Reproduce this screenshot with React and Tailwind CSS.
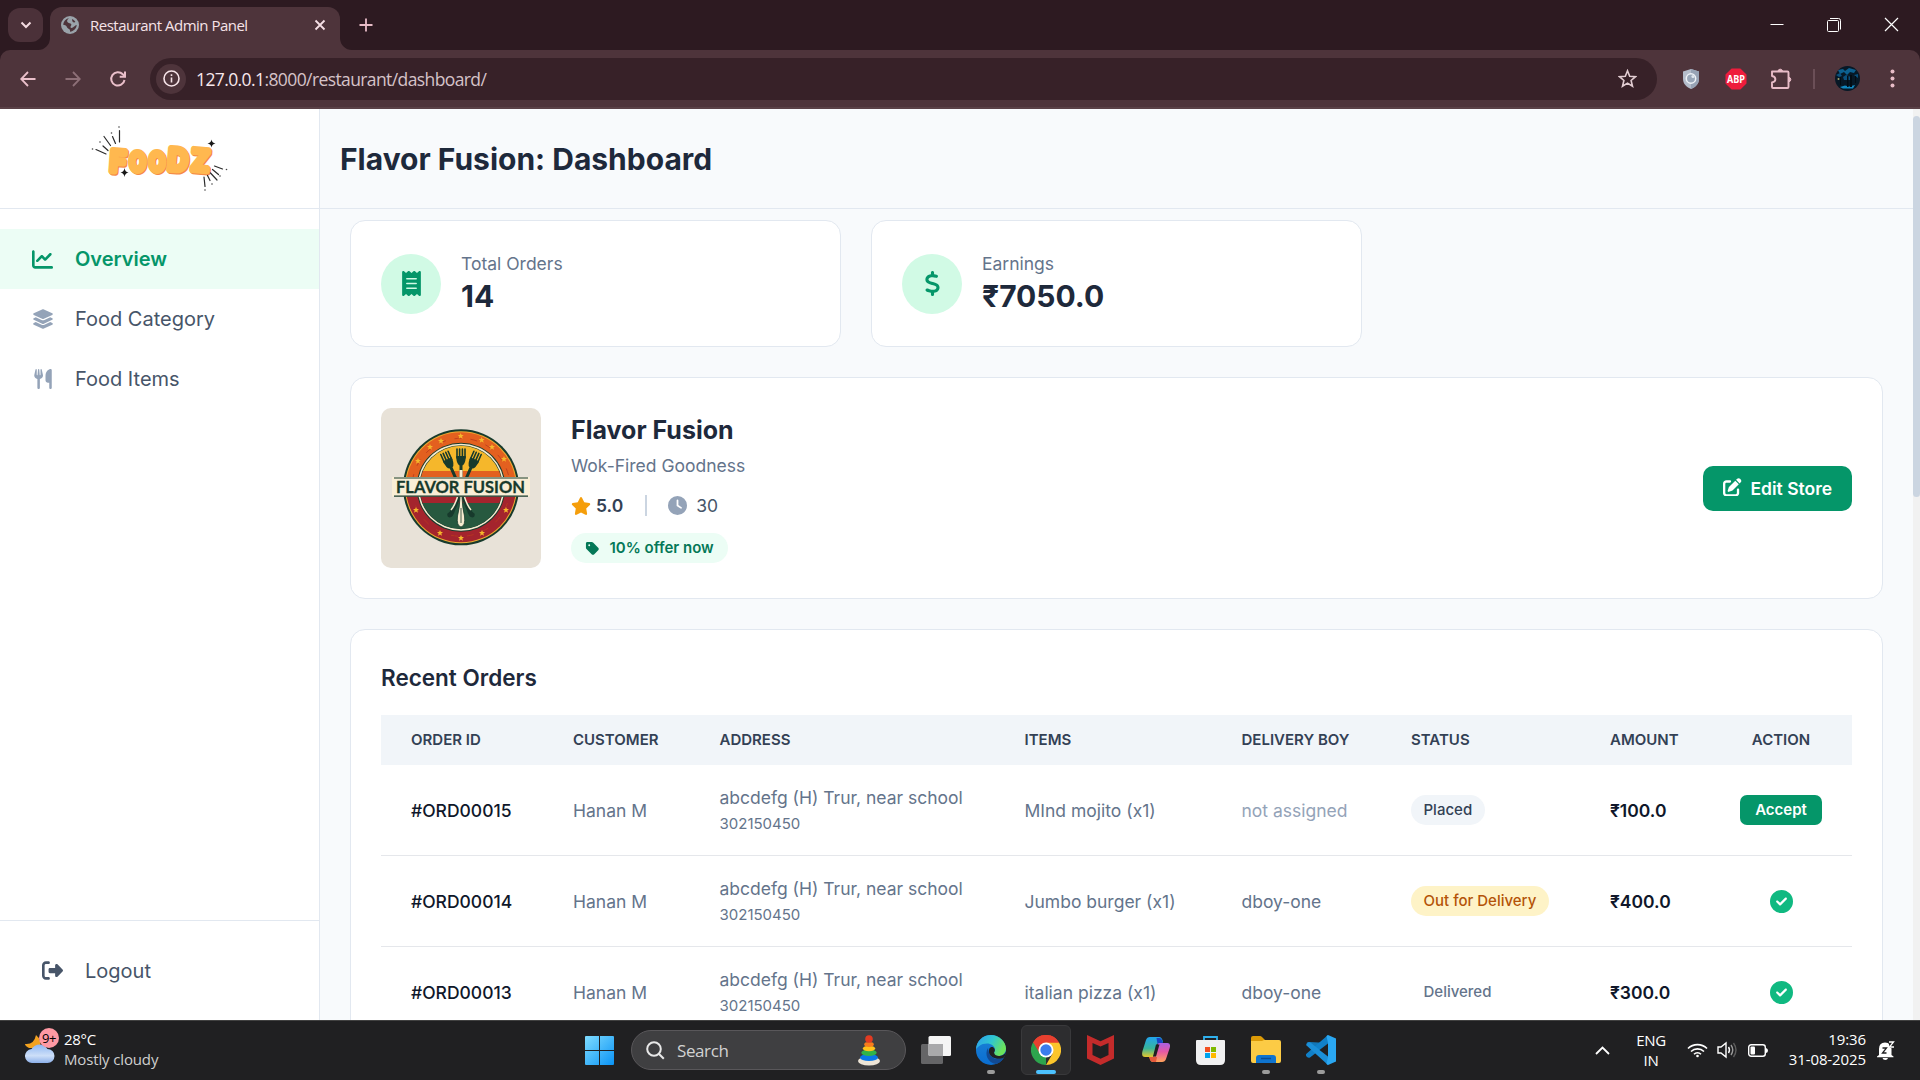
import React from "react";
import {
  FaChartLine, FaLayerGroup, FaUtensils, FaRightFromBracket, FaReceipt, FaDollarSign,
  FaStar, FaClock, FaTag, FaPenToSquare, FaCircleCheck,
} from "react-icons/fa6";

/* ---------- Browser chrome ---------- */

function GlobeIcon() {
  return (
    <svg width="18" height="18" viewBox="0 0 18 18">
      <circle cx="9" cy="9" r="9" fill="#9aa3aa" />
      <path d="M8 2.2C6.6 3 5.6 4.6 6.4 6c.9 1.500 3.300.8 3.900 2.200.5 1.300-1 1.700-.8 3 .2 1 1.600.8 2.700.1 1.300-.8 2-2.200 3.500-2.300-.2 3.500-3 6.400-6.700 6.700.3-1.500-.2-2.400-1.500-2.900-1.700-.6-1.400-2.300-2.800-3.200C3.900 9 2.900 9 2.300 8.800 2.400 5.500 4.700 2.800 8 2.200z" fill="#4e343b" />
      <path d="M11 3c1.400.5 2.700 1.600 3.400 3-.9.700-2.300.5-2.900-.5-.5-.9-.2-1.700-.5-2.500z" fill="#4e343b" />
    </svg>
  );
}

function TabStrip() {
  return (
    <div className="flex h-[50px] items-start bg-[#2d1a21]">
      <div className="ml-2 mt-2 flex h-[34px] w-[35px] items-center justify-center rounded-xl bg-[#4b3139]">
        <svg width="12" height="8" viewBox="0 0 12 8" fill="none" stroke="#f4dbe1" strokeWidth="2"><path d="M1.500 1.500L6 6l4.500-4.500" /></svg>
      </div>
      <div className="relative ml-[7px] mt-[7px] flex h-[43px] w-[290px] items-center rounded-t-xl bg-[#4e343b] pb-[7px] pl-[11px]">
        <svg className="absolute -left-3 bottom-0" width="12" height="12" viewBox="0 0 12 12"><path d="M12 0v12H0A12 12 0 0 0 12 0z" fill="#4e343b" /></svg>
        <svg className="absolute -right-3 bottom-0" width="12" height="12" viewBox="0 0 12 12"><path d="M0 0v12h12A12 12 0 0 1 0 0z" fill="#4e343b" /></svg>
        <GlobeIcon />
        <span className="ml-[11px] w-[210px] whitespace-nowrap text-[15px] leading-5 tracking-[-0.51px] text-[#f6e3e8]">Restaurant Admin Panel</span>
        <svg className="ml-[14px]" width="12" height="12" viewBox="0 0 12 12" stroke="#f6dfe5" strokeWidth="1.800" fill="none"><path d="M1.500 1.500l9 9M10.500 1.500l-9 9" /></svg>
      </div>
      <svg className="ml-[19px] mt-[18px]" width="14" height="14" viewBox="0 0 14 14" stroke="#e8bcc7" strokeWidth="1.800"><path d="M7 .5v13M.5 7h13" /></svg>
      <div className="ml-auto mr-[21px] mt-[17px] flex items-center gap-[43px] text-white">
        <svg width="14" height="14" viewBox="0 0 14 14" stroke="#fff"><path d="M.5 6.500h13" /></svg>
        <svg width="14" height="14" viewBox="0 0 14 14" stroke="#fff" fill="none"><path d="M3 .5h8.500a2 2 0 0 1 2 2v9" /><rect x=".5" y="2.500" width="11" height="11" rx="1" /></svg>
        <svg width="15" height="15" viewBox="0 0 15 15" stroke="#fff" strokeWidth="1.200"><path d="M1 1l13 13M14 1L1 14" /></svg>
      </div>
    </div>
  );
}

function Toolbar() {
  return (
    <div className="h-[59px] bg-[#2d1a21]">
      <div className="flex h-[59px] items-center rounded-t-[10px] border-b-2 border-[#5a4147] bg-[#4e343b]">
        <svg className="ml-5" width="16" height="16" viewBox="0 0 16 16" fill="none" stroke="#eabfca" strokeWidth="1.800"><path d="M15.500 8H1.500M8 1L1.200 8 8 15" /></svg>
        <svg className="ml-[29px]" width="16" height="16" viewBox="0 0 16 16" fill="none" stroke="#8d6f77" strokeWidth="1.800"><path d="M.5 8h14M8 1l6.800 7L8 15" /></svg>
        <svg className="ml-[28px]" width="18" height="18" viewBox="0 0 18 18" fill="none" stroke="#eabfca" strokeWidth="2"><path d="M15.500 10A6.700 6.700 0 1 1 13.800 4.300L16 6.500" /><path d="M16 1.500v5.300h-5.300" /></svg>
        <div className="ml-[23px] flex h-[42px] w-[1507px] items-center rounded-full bg-[#372128] pl-[6px] pr-[20px]">
          <div className="flex h-[30px] w-[30px] items-center justify-center rounded-full bg-[#4e343b]">
            <svg width="17" height="17" viewBox="0 0 17 17" fill="none" stroke="#f6e3e8" strokeWidth="1.600"><circle cx="8.500" cy="8.500" r="7.500" /><path d="M8.500 7.500v5M8.500 4.300v1.800" /></svg>
          </div>
          <div className="ml-[10px] whitespace-nowrap text-[17.500px] leading-6 tracking-[-0.6px] text-[#d6c3c8]"><span className="text-[#f8e8ec]">127.0.0.1</span>:8000/restaurant/dashboard/</div>
          <svg className="ml-auto" width="19" height="19" viewBox="0 0 19 19" fill="none" stroke="#e2cdd2" strokeWidth="1.600"><path d="M9.500 1.800l2.200 5.400 5.800.5-4.400 3.800 1.400 5.700-5-3.100-5 3.100 1.400-5.700L1.500 7.700l5.800-.5z" /></svg>
        </div>
        <svg className="ml-[25px]" width="18" height="20" viewBox="0 0 18 20"><path d="M9 0l8 2.500V10c0 5-4 8.500-8 10-4-1.500-8-5-8-10V2.500z" fill="#b4bdcb" /><path d="M9 0l8 2.500V10c0 5-4 8.500-8 10z" fill="#97a3b5" /><circle cx="9" cy="9.500" r="4.700" fill="#98a6b8" stroke="#eef2f7" strokeWidth="1.500" /><circle cx="11" cy="7.500" r="1.600" fill="#dfe6ee" /></svg>
        <svg className="ml-[25px]" width="22" height="22" viewBox="0 0 22 22"><path d="M6.600.5h8.800l6.100 6.100v8.800l-6.100 6.100H6.600L.5 15.400V6.600z" fill="#ee1c3c" /><text x="11" y="15" textAnchor="middle" fontSize="10.500" fontWeight="700" fill="#fff" textLength="18" lengthAdjust="spacingAndGlyphs">ABP</text></svg>
        <svg className="ml-[23px]" width="22" height="22" viewBox="0 0 22 22" fill="none" stroke="#e8bcc7" strokeWidth="1.900" strokeLinejoin="round"><path d="M2 3.500h15.500q1 0 1 1v14.500q0 1-1 1H3q-1 0-1-1v-4.500c4.500-1 4.500-5.500 0-6.500z" /><path d="M8 3a2.300 2.300 0 0 1 4.500 0zM19 9.300a2.300 2.300 0 0 1 0 4.500z" fill="#e8bcc7" strokeWidth="1" /></svg>
        <div className="ml-[21px] h-5 w-[2px] bg-[#6b4f57]" />
        <svg className="ml-[20px]" width="25" height="25" viewBox="0 0 25 25"><defs><clipPath id="avatar"><circle cx="12.500" cy="12.500" r="12.500" /></clipPath></defs><g clipPath="url(#avatar)"><rect width="25" height="25" fill="#071826" /><path d="M3 4l5-1 2 2 4-3 7 2-2 3-4-1-3 3-3-3-4 2z" fill="#0c6090" /><path d="M1 9l4-2 2 3-3 1zM19 9l4-1v4zM8 11l3-2 5 2-1 3H9z" fill="#0a4f7c" /><path d="M5 21l5-1.500 4 1 6-1.500-2 3.500H8z" fill="#1186bd" /><path d="M12 10h1.500v11H12zM15 9h2v12h-2zM5 11h1v8H5zM20 10h1v7h-1z" fill="#020c14" /><circle cx="3.500" cy="13" r="1" fill="#a0a46c" /></g></svg>
        <svg className="ml-[30px]" width="5" height="19" viewBox="0 0 5 19" fill="#e8bcc7"><circle cx="2.500" cy="2.500" r="2" /><circle cx="2.500" cy="9.500" r="2" /><circle cx="2.500" cy="16.500" r="2" /></svg>
      </div>
    </div>
  );
}

/* ---------- Sidebar ---------- */

const logoLetters = [
  { ch: "F", x: 33, y: 53.500, w: 16, size: 29, rot: 4 },
  { ch: "O", x: 52.500, y: 53, w: 16, size: 25, rot: 0 },
  { ch: "O", x: 72, y: 53, w: 16, size: 25, rot: 0 },
  { ch: "D", x: 93, y: 52.500, w: 20, size: 30, rot: 5 },
  { ch: "Z", x: 115.500, y: 52.500, w: 18, size: 29, rot: 5 },
];

function FoodzLogo() {
  const letters = (color, dx, dy) =>
    logoLetters.map((l, i) => (
      <text key={i} x={l.x + dx} y={l.y + dy} fontSize={l.size} fontWeight="600" textAnchor="middle"
        textLength={l.w} lengthAdjust="spacingAndGlyphs" fill={color} stroke={color} strokeWidth="6"
        strokeLinejoin="round" strokeLinecap="round" transform={`rotate(${l.rot} ${l.x} 42)`}>{l.ch}</text>
    ));
  return (
    <svg width="150" height="80" viewBox="0 0 150 80">
      {letters("#f58b47", 1, 1.2)}
      {letters("#ffb84f", 0, 0)}
      <g stroke="#2b2b2b" strokeWidth="1.200" strokeLinecap="round">
        <path d="M34.500 12.500v11.500M27.500 18.500l3 7M19 18.500l6.500 9M18 28l5 4.500M11 31.500l10 4.500" />
        <path d="M129.500 48l8 3M127.500 51.500l6 5M125.500 55l6.500 7M122.500 57.500l2.500 5M119 59l1 9.500" />
      </g>
      <g fill="#444">
        <circle cx="34" cy="9" r=".8" /><circle cx="26.500" cy="15" r=".8" /><circle cx="15" cy="24" r=".8" /><circle cx="7.500" cy="31" r=".8" />
        <circle cx="141.500" cy="51.500" r=".8" /><circle cx="135" cy="58" r=".8" /><circle cx="127" cy="66" r=".8" /><circle cx="120" cy="72" r=".8" />
      </g>
      <path d="M126.500 21.500q.5 3.500 4 4-3.500.5-4 4-.5-3.500-4-4 3.500-.5 4-4zM39.500 50q.5 4 4 4.500-3.500.5-4 4.500-.5-4-4-4.500 3.500-.5 4-4.500z" fill="#171717" />
    </svg>
  );
}

function NavItem({ icon: Icon, size = 20, label, active }) {
  return (
    <div className={active ? "flex h-[60px] items-center bg-[#ecfdf5] pl-[30px] font-semibold text-[#059669]" : "flex h-[60px] items-center pl-[30px] text-[#475569]"}>
      <span className={active ? "flex w-[25px] justify-center" : "flex w-[25px] justify-center text-[#94a3b8]"}><Icon size={size} /></span>
      <span className="ml-5 text-[20px] leading-[30px]">{label}</span>
    </div>
  );
}

function Sidebar() {
  return (
    <aside className="flex w-[320px] shrink-0 flex-col border-r border-[#e2e8f0] bg-white">
      <div className="flex h-[100px] items-start justify-center border-b border-[#e2e8f0] pt-[9px]">
        <FoodzLogo />
      </div>
      <nav className="mt-5 flex-1">
        <NavItem icon={FaChartLine} size={21} label="Overview" active />
        <NavItem icon={FaLayerGroup} size={22} label="Food Category" />
        <NavItem icon={FaUtensils} label="Food Items" />
      </nav>
      <div className="flex h-[100px] items-center border-t border-[#e2e8f0] pl-[40px] text-[#475569]">
        <span className="flex w-[25px] justify-center"><FaRightFromBracket size={21} /></span>
        <span className="ml-5 text-[20px] leading-[30px]">Logout</span>
      </div>
    </aside>
  );
}

/* ---------- Dashboard ---------- */

function StatCard({ icon: Icon, label, value }) {
  return (
    <div className="flex h-[127px] items-center rounded-[15px] border border-[#e2e8f0] bg-white pl-[30px]">
      <div className="flex h-[60px] w-[60px] items-center justify-center rounded-full bg-[#d1fae5] pb-px text-[#059669]"><Icon size={25} /></div>
      <div className="ml-5">
        <div className="text-[17.500px] leading-[25px] text-[#64748b]">{label}</div>
        <div className="text-[30px] font-bold leading-[40px] text-[#1e293b]">{value}</div>
      </div>
    </div>
  );
}

const ringStars = [
  [60, 33], [79.7, 28], [100.7, 32], [111, 39], [49, 39], [37, 53], [123, 51],
  [35, 102], [59, 125], [80, 130], [101, 125], [125, 102],
];

function Fork({ transform }) {
  return (
    <g transform={transform} stroke="#173a2c" fill="none" strokeLinecap="round">
      <path d="M-4 -10v9M-1.400 -10v9M1.400 -10v9M4 -10v9" strokeWidth="1.600" />
      <path d="M-4.700 -3h9.400q0 8-3.200 9.500V19h-3V6.500q-3.200-1.500-3.200-9.500z" fill="#173a2c" stroke="none" />
    </g>
  );
}

function StoreLogo() {
  return (
    <svg className="rounded-[10px]" width="160" height="160" viewBox="0 0 160 160">
      <defs>
        <clipPath id="ringTop"><rect width="160" height="79" /></clipPath>
        <clipPath id="ringBottom"><rect y="79" width="160" height="81" /></clipPath>
        <clipPath id="plate"><circle cx="80" cy="79.300" r="41.500" /></clipPath>
      </defs>
      <rect width="160" height="160" fill="#e8e2d8" />
      <circle cx="80" cy="79.300" r="58" fill="#173a2c" />
      <circle cx="80" cy="79.300" r="56" fill="#edab31" />
      <circle cx="80" cy="79.300" r="55" fill="#e3601f" clipPath="url(#ringTop)" />
      <circle cx="80" cy="79.300" r="55" fill="#a4242d" clipPath="url(#ringBottom)" />
      <circle cx="80" cy="79.300" r="49" fill="none" stroke="#b93a20" strokeWidth=".8" strokeDasharray="7 9" />
      <circle cx="80" cy="79.300" r="44.500" fill="#173a2c" />
      <circle cx="80" cy="79.300" r="43.500" fill="#f7ecd0" />
      <circle cx="80" cy="79.300" r="42" fill="#173a2c" />
      <g clipPath="url(#plate)">
        <rect x="30" y="30" width="100" height="33" fill="#f5b72b" />
        <rect x="30" y="63" width="100" height="10" fill="#e3601f" />
        <rect x="30" y="86" width="100" height="9" fill="#a4242d" />
        <rect x="30" y="95" width="100" height="40" fill="#27593f" />
      </g>
      {ringStars.map(([x, y], i) => (
        <path key={i} transform={`translate(${x} ${y})`} d="M0-3L.9-1H3L1.300.5 2 2.800 0 1.500-2 2.800-1.300.5-3-1H-.9z" fill="#f5b72b" />
      ))}
      <Fork transform="translate(67.500 54) rotate(-24)" />
      <Fork transform="translate(92.500 54) rotate(24)" />
      <Fork transform="translate(80 51)" />
      <path d="M78.500 62h3v8h-3z" fill="#f7ecd0" />
      <path d="M77 88q-6 15-10.500 17.500-1 3.500 2 4 4-.5 5.500-7L79.500 90zM83 88q6 15 10.500 17.500 1 3.500-2 4-4-.5-5.500-7L80.500 90z" fill="#173a2c" />
      <path d="M76.500 89q-3 9-6.500 13M83.500 89q3 9 6.500 13" stroke="#f7ecd0" strokeWidth="1.500" fill="none" />
      <path d="M79 88h2q.3 12 2.500 20 1.200 10-3.500 11-4.700-1-3.500-11Q78.700 100 79 88z" fill="#f7ecd0" stroke="#173a2c" strokeWidth=".8" />
      <path d="M80 100v15" stroke="#173a2c" strokeWidth=".8" />
      <rect x="11" y="69" width="138" height="19.500" fill="#f9eed6" />
      <path d="M13 70h134M13 88.200h134" stroke="#173a2c" strokeWidth="1.200" />
      <text x="15" y="85.200" fontSize="17.500" fontWeight="700" fontFamily="Lato, sans-serif" fill="#173a2c" stroke="#173a2c" strokeWidth=".3" textLength="129" lengthAdjust="spacingAndGlyphs">FLAVOR FUSION</text>
    </svg>
  );
}

function StoreCard() {
  return (
    <section className="mt-[30px] flex h-[222px] items-center rounded-[15px] border border-[#e2e8f0] bg-white px-[30px]">
      <StoreLogo />
      <div className="ml-[30px]">
        <h2 className="text-[25px] font-bold leading-[35px] text-[#1e293b]">Flavor Fusion</h2>
        <p className="mt-[5px] text-[17.500px] leading-[25px] text-[#64748b]">Wok-Fired Goodness</p>
        <div className="mt-[15px] flex h-[25px] items-center text-[17.500px] text-[#475569]">
          <FaStar className="text-[#f59e0b]" size={20} />
          <span className="ml-[5px] pt-px font-semibold leading-[24px] text-[#334155]">5.0</span>
          <span className="ml-[22px] h-[21px] w-[2px] bg-[#cbd5e1]" />
          <FaClock className="ml-[21px] text-[#94a3b8]" size={19} />
          <span className="ml-[9px] pt-px leading-[24px]">30</span>
        </div>
        <span className="mt-[15px] flex h-[30px] w-[157px] items-center rounded-full bg-[#ecfdf5] pl-[14px] text-[15px] font-semibold text-[#047857]">
          <FaTag size={15} /><span className="ml-[9.500px] whitespace-nowrap">10% offer now</span>
        </span>
      </div>
      <button className="ml-auto flex h-[45px] w-[149px] items-center rounded-[10px] bg-[#059669] pl-[20px] text-[17.500px] font-semibold text-white">
        <FaPenToSquare className="mb-[2px]" size={18.500} /><span className="ml-[9px] whitespace-nowrap pt-px leading-[24px]">Edit Store</span>
      </button>
    </section>
  );
}

const columns = [
  ["ORDER ID", "w-[162px]"], ["CUSTOMER", "w-[146.500px]"], ["ADDRESS", "w-[305px]"], ["ITEMS", "w-[217px]"],
  ["DELIVERY BOY", "w-[169.500px]"], ["STATUS", "w-[199px]"], ["AMOUNT", "w-[130px]"], ["ACTION", "w-[142px]"],
];

const orders = [
  { id: "#ORD00015", item: "MInd mojito (x1)", boy: null, status: "Placed", badge: "bg-[#f1f5f9] text-[#334155]", amount: "₹100.0" },
  { id: "#ORD00014", item: "Jumbo burger (x1)", boy: "dboy-one", status: "Out for Delivery", badge: "bg-[#fef3c7] text-[#b45309]", amount: "₹400.0" },
  { id: "#ORD00013", item: "italian pizza (x1)", boy: "dboy-one", status: "Delivered", badge: "text-[#64748b]", amount: "₹300.0" },
];

function OrdersCard() {
  return (
    <section className="mt-[30px] rounded-[15px] border border-[#e2e8f0] bg-white p-[30px]">
      <h2 className="mb-5 text-[22.500px] font-semibold leading-[35px] text-[#1e293b]">Recent Orders</h2>
      <table className="w-[1471px] table-fixed border-separate border-spacing-0 text-left text-[17.500px] leading-[25px] text-[#64748b]">
        <thead className="bg-[#f1f5f9] text-[15px] text-[#334155]">
          <tr className="h-[50px]">
            {columns.map(([name, w], i) => (
              <th key={name} className={`${w} whitespace-nowrap pb-[2px] font-semibold ${i === 7 ? "text-center" : "pl-[30px]"}`}>{name}</th>
            ))}
          </tr>
        </thead>
        <tbody>
          {orders.map((o) => (
            <tr key={o.id} className="h-[91px] whitespace-nowrap [&>td]:border-b [&>td]:border-[#e5e7eb]">
              <td className="pl-[30px] pt-px font-medium text-[#0f172a]">{o.id}</td>
              <td className="pl-[30px] pt-px">Hanan M</td>
              <td className="pl-[30px] pt-px">abcdefg (H) Trur, near school<br /><span className="text-[15px]">302150450</span></td>
              <td className="pl-[30px] pt-px">{o.item}</td>
              <td className="pl-[30px] pt-px">{o.boy || <span className="text-[#94a3b8]">not assigned</span>}</td>
              <td className="pl-[30px]"><span className={`flex h-[30px] w-fit items-center rounded-full px-[12.500px] pb-px text-[15px] font-medium ${o.badge}`}>{o.status}</span></td>
              <td className="pl-[30px] pt-px font-semibold text-[#0f172a]">{o.amount}</td>
              <td>
                {o.boy
                  ? <FaCircleCheck className="mx-auto block text-[#10b981]" size={23} />
                  : <button className="mx-auto flex h-[30px] w-[82px] items-center justify-center rounded-[7px] bg-[#059669] pb-px text-[15px] font-semibold text-white">Accept</button>}
              </td>
            </tr>
          ))}
        </tbody>
      </table>
    </section>
  );
}

/* ---------- Taskbar ---------- */

function Tile({ children, active, running }) {
  return (
    <div className={active ? "relative flex h-[50px] w-[50px] items-center justify-center rounded-md border border-[#39393b] bg-[#2d2d2f]" : "relative flex h-[50px] w-[50px] items-center justify-center"}>
      {children}
      {running && <span className="absolute bottom-[1px] h-1 w-2 rounded-full bg-[#9b9b9b]" />}
      {active && <span className="absolute bottom-0 h-1 w-5 rounded-full bg-[#4cc2ff]" />}
    </div>
  );
}

function Taskbar() {
  return (
    <footer className="flex h-[60px] items-center border-t border-[#414141] bg-[#202022] pb-px text-white">
      <div className="flex w-[574px] items-center pl-[25px] text-[15px] leading-5">
        <div className="relative h-[30px] w-[32px]">
          <svg width="32" height="30" viewBox="0 0 32 30">
            <defs><linearGradient id="cloud" x2="0" y2="1"><stop stopColor="#8fb7f2" /><stop offset=".6" stopColor="#cddff8" /><stop offset="1" stopColor="#8cb0ea" /></linearGradient></defs>
            <path d="M11 0q6 5 4 13H4q-4-2-4-4 9 1 11-9z" fill="#f3a21f" />
            <path d="M7.500 28a7 7 0 0 1-1-14 9.500 9.500 0 0 1 16 0 7 7 0 0 1 0 14z" fill="url(#cloud)" />
          </svg>
          <span className="absolute -top-[7px] left-[14px] flex h-5 w-5 items-center justify-center rounded-full bg-[#ff99a4] text-[13px] tracking-[-0.500px] text-black">9+</span>
        </div>
        <div className="-mt-[2px] ml-[7px] whitespace-nowrap">
          <div className="tracking-[-0.300px]">28°C</div>
          <div className="tracking-[-0.14px] text-[#cfcfcf]">Mostly cloudy</div>
        </div>
      </div>
      <Tile>
        <svg className="ml-px mt-px" width="29" height="29" viewBox="0 0 29 29"><defs><linearGradient id="win" x2="1" y2="1"><stop stopColor="#7fdcff" /><stop offset="1" stopColor="#0a93f5" /></linearGradient></defs><path d="M0 1q0-1 1-1h13v14H0zM15 0h13q1 0 1 1v13H15zM0 15h14v14H1q-1 0-1-1zM15 15h14v13q0 1-1 1H15z" fill="url(#win)" /></svg>
      </Tile>
      <div className="ml-[7px] mr-[5px] flex h-10 w-[275px] items-center rounded-full border border-[#59575a] bg-[#3f3f41] pl-[14px] pr-[25px]">
        <svg width="19" height="19" viewBox="0 0 19 19" fill="none" stroke="#e8e8e8" strokeWidth="2"><circle cx="8" cy="8" r="6.800" /><path d="M12.800 12.800l5 5" /></svg>
        <span className="ml-3 pt-[2px] text-[17px] leading-6 tracking-[-0.400px] text-[#d2d2d2]">Search</span>
        <svg className="ml-auto" width="22" height="31" viewBox="0 0 22 31"><ellipse cx="11" cy="26" rx="11" ry="4.500" fill="#eee5d6" /><ellipse cx="11" cy="22.500" rx="9" ry="3.600" fill="#0a78e8" /><ellipse cx="11" cy="17.800" rx="7.700" ry="3.200" fill="#30b44a" /><ellipse cx="11" cy="13.500" rx="6.200" ry="2.800" fill="#ffc21a" /><ellipse cx="11" cy="9.500" rx="4.800" ry="2.400" fill="#f87c1c" /><circle cx="11" cy="4" r="3.800" fill="#e23b22" /></svg>
      </div>
      <div className="flex gap-[5px]">
        <Tile><svg width="30" height="28" viewBox="0 0 30 28"><rect y="8" width="22" height="20" rx="1.500" fill="#656567" /><rect x="7.500" width="22.500" height="20" rx="1.500" fill="#f5f5f5" /><path d="M7.500 8H22v12H9q-1.500 0-1.500-1.500z" fill="#a9a9ab" /></svg></Tile>
        <Tile running>
          <svg width="30" height="30" viewBox="0 0 30 30"><defs><linearGradient id="edgeA" x2="1" y2=".4"><stop stopColor="#2c9cf0" /><stop offset=".55" stopColor="#30c7d0" /><stop offset="1" stopColor="#6be35c" /></linearGradient><linearGradient id="edgeB" x2="0" y2="1"><stop stopColor="#1b82d6" /><stop offset="1" stopColor="#0a6dd0" /></linearGradient></defs>
            <circle cx="15" cy="15" r="15" fill="url(#edgeB)" />
            <path d="M0 15C0 6 7 0 15 0s15 6.500 15 13.500c0 5-4 7.500-7.500 7.500-3 0-5-1.200-5-2.200 0-.8 1.500-1.500 1.500-4C19 11 15 8.500 11 8.500 5 8.500 1 12 0 15z" fill="url(#edgeA)" />
            <path d="M12 13c-4 6 0 15 8 16 3.500-1 6.500-3.500 7.700-6.500-6 3.500-15 1.500-15.700-9.500z" fill="#114a94" />
            <path d="M18.500 18.500c0 1.500 2.500 2.700 5 2.500 3.500-.2 5.500-2 6.500-4.500 0 2.500-.8 4.500-1.800 6-3 1.500-8 2-12-.5-3-2-4-5.500-3-8 1-2 3-2.500 4.300-1.500 1.500 1.200 1.800 3 .8 4.500-.5.700-.3 1 .2 1.500z" fill="#202022" />
          </svg>
        </Tile>
        <Tile active>
          <svg width="30" height="30" viewBox="0 0 30 30"><path d="M15 15L2 7.500A15 15 0 0 1 28 7.500z" fill="#e8402f" /><path d="M15 15L15 30A15 15 0 0 1 2 7.500z" fill="#2da44d" /><path d="M15 7.500H28A15 15 0 0 1 15 30L21.500 18.700z" fill="#fbc52b" /><path d="M2 7.500L8.500 18.700 15 15V7.500z" fill="#2da44d" /><path d="M2 7.500h.3L8.500 18 9 10l6-2.500h13A15 15 0 0 0 2 7.500z" fill="#e8402f" /><circle cx="15" cy="15" r="7.500" fill="#fff" /><circle cx="15" cy="15" r="5.700" fill="#3b7ded" /></svg>
        </Tile>
        <Tile><svg className="mr-px" width="27" height="30" viewBox="0 0 27 30"><path d="M0 0l13.500 6.200L27 0v23.500L13.500 30 0 23.500zM5.500 8v12l8 3.800 8-3.800V8l-8 3.500z" fill="#c42b2b" fillRule="evenodd" /></svg></Tile>
        <Tile>
          <svg width="28" height="26" viewBox="0 0 28 26"><defs><linearGradient id="copA" x2="0" y2="1"><stop stopColor="#22a4ee" /><stop offset=".5" stopColor="#38b59b" /><stop offset=".85" stopColor="#d9c734" /></linearGradient><linearGradient id="copB" x2="0" y2="1"><stop stopColor="#9e63f0" /><stop offset=".5" stopColor="#e558a5" /><stop offset="1" stopColor="#ffa35a" /></linearGradient></defs>
            <path d="M8 0h9q3 0 4 5l-6 2-4 14q-1 4-4-1H3q-4 0-2.500-6L4 3q1-3 4-3z" fill="url(#copA)" />
            <path d="M20 25h-9q-3 0-3-4l4.500-2 4-14q1-2 4 1h5q3.500 0 2.200 5L24 22q-1 3-4 3z" fill="url(#copB)" />
            <path d="M14.500 1H17q3 0 4 5h-3q-2 0-2.500 1z" fill="#1746c5" /><path d="M12 7.500h3.500l-3.500 12H9z" fill="#202022" transform="translate(2 0)" /><path d="M7 20q1 4.500 4 5h3l1-5z" fill="#e4593b" />
          </svg>
        </Tile>
        <Tile><svg className="mr-px" width="29" height="29" viewBox="0 0 29 29"><path d="M8 6V1h13v5" fill="none" stroke="#2fb1ee" strokeWidth="1.800" /><path d="M0 5q0-1 1-1h27q1 0 1 1v19q0 5-5 5H5q-5 0-5-5z" fill="#f1f1f2" /><path d="M9 11h5v5H9z" fill="#f25022" /><path d="M15 11h5v5h-5z" fill="#7fba00" /><path d="M9 17h5v5H9z" fill="#00a4ef" /><path d="M15 17h5v5h-5z" fill="#ffb900" /></svg></Tile>
        <Tile running><svg width="30" height="28" viewBox="0 0 30 28"><path d="M0 2q0-2 2-2h7q1 0 2 1l3 3v6H0z" fill="#dc9a07" /><path d="M0 5h11l2-1h15q2 0 2 2v19q0 2-2 2H2q-2 0-2-2z" fill="#fccb45" /><path d="M5 27v-5q0-3 3-3h14q3 0 3 3v5z" fill="#0f74cf" /><path d="M10 22.500h10" stroke="#0b4c94" strokeWidth="1.500" /></svg></Tile>
        <Tile running><svg width="30" height="30" viewBox="0 0 30 30"><path d="M22 8v14L1.500 10.500q-2-1.500 0-3.200L3.500 7z" fill="#1277b8" /><path d="M22 0v8.500L4 22.500q-1.500.8-3-.5l-.8-1q-.8-1.500.5-2.500z" fill="#1180c8" /><path d="M0 10l2-2.500q1.500-.8 3 .5L22 21.500V30z" fill="#1b8fd8" /><path d="M22 0l8 3.500v23L22 30l-1.500-1L22 22V8L20.500 1z" fill="#2aa7f2" /><path d="M22 8.500V21.500L13.500 15z" fill="#202022" /></svg></Tile>
      </div>
      <div className="ml-auto mr-[25px] flex items-center whitespace-nowrap text-[15px] leading-5">
        <svg width="15" height="9" viewBox="0 0 15 9" fill="none" stroke="#fff" strokeWidth="1.800"><path d="M1 8l6.500-6.500L14 8" /></svg>
        <div className="ml-[24px] w-[34px] text-center tracking-[-0.300px]">ENG<br />IN</div>
        <svg className="ml-[19px]" width="21" height="16" viewBox="0 0 21 16" fill="none" stroke="#fff" strokeWidth="1.600"><path d="M1 6.500a13.500 13.500 0 0 1 19 0M4 9.500a9.300 9.300 0 0 1 13 0M7 12.300a5 5 0 0 1 7 0" /><circle cx="10.500" cy="14" r="1.300" fill="#fff" stroke="none" /></svg>
        <svg className="ml-[9px]" width="21" height="18" viewBox="0 0 21 18" fill="none" stroke="#fff" strokeWidth="1.400"><path d="M1 6h3l5-4v14l-5-4H1z" /><path d="M11.500 6q2 3 0 6" /><path d="M14 4q3.500 5 0 10" stroke="#9a9a9a" /><path d="M16.500 2q5 7 0 14" stroke="#5c5c5c" /></svg>
        <svg className="ml-[10px]" width="20" height="13" viewBox="0 0 20 13"><rect x=".7" y=".7" width="16.600" height="11.600" rx="2.500" fill="none" stroke="#fff" strokeWidth="1.400" /><rect x="2.500" y="2.500" width="4.500" height="8" rx="1" fill="#fff" /><path d="M18 4q2 .5 2 2.500t-2 2.500z" fill="#fff" /></svg>
        <div className="-mt-[2px] ml-[10px] w-[88px] text-right tracking-[-0.1px]">19:36<br />31-08-2025</div>
        <svg className="ml-[11px]" width="18" height="19" viewBox="0 0 18 19"><path d="M2 14V8q0-6.500 6-6.500 6.500 0 6.500 6.500v6l2 1.500v.8H0v-.8zM5.500 17h5.500q-.5 2-2.700 2-2.300 0-2.800-2z" fill="#fff" /><path d="M5.500 7h4l-4 5h4" fill="none" stroke="#202022" strokeWidth="1.300" /><path d="M11 0h7v7h-5z" fill="#202022" /><path d="M12 1h4.500L12.500 6H17" fill="none" stroke="#fff" strokeWidth="1.300" /></svg>
      </div>
    </footer>
  );
}

export default function App() {
  return (
    <div className="flex h-[1080px] w-[1920px] flex-col overflow-hidden font-['Open_Sans',sans-serif]">
      <TabStrip />
      <Toolbar />
      <div className="flex h-[911px] bg-[#f8fafc] font-['Inter',sans-serif]">
        <Sidebar />
        <div className="flex w-[1593px] flex-col">
          <header className="flex h-[100px] shrink-0 items-center border-b border-[#e2e8f0] pl-5">
            <h1 className="text-[30px] font-bold leading-[40px] text-[#1e293b]">Flavor Fusion: Dashboard</h1>
          </header>
          <main className="h-[811px] overflow-hidden px-[30px] pt-[11px]">
            <div className="grid grid-cols-3 gap-[30px]">
              <StatCard icon={FaReceipt} label="Total Orders" value="14" />
              <StatCard icon={FaDollarSign} label="Earnings" value="₹7050.0" />
            </div>
            <StoreCard />
            <OrdersCard />
          </main>
        </div>
        <div className="w-[7px] bg-[#f1f1f1] pt-[7px]"><div className="h-[381px] rounded-full bg-[#cbd5e1]" /></div>
      </div>
      <Taskbar />
    </div>
  );
}
